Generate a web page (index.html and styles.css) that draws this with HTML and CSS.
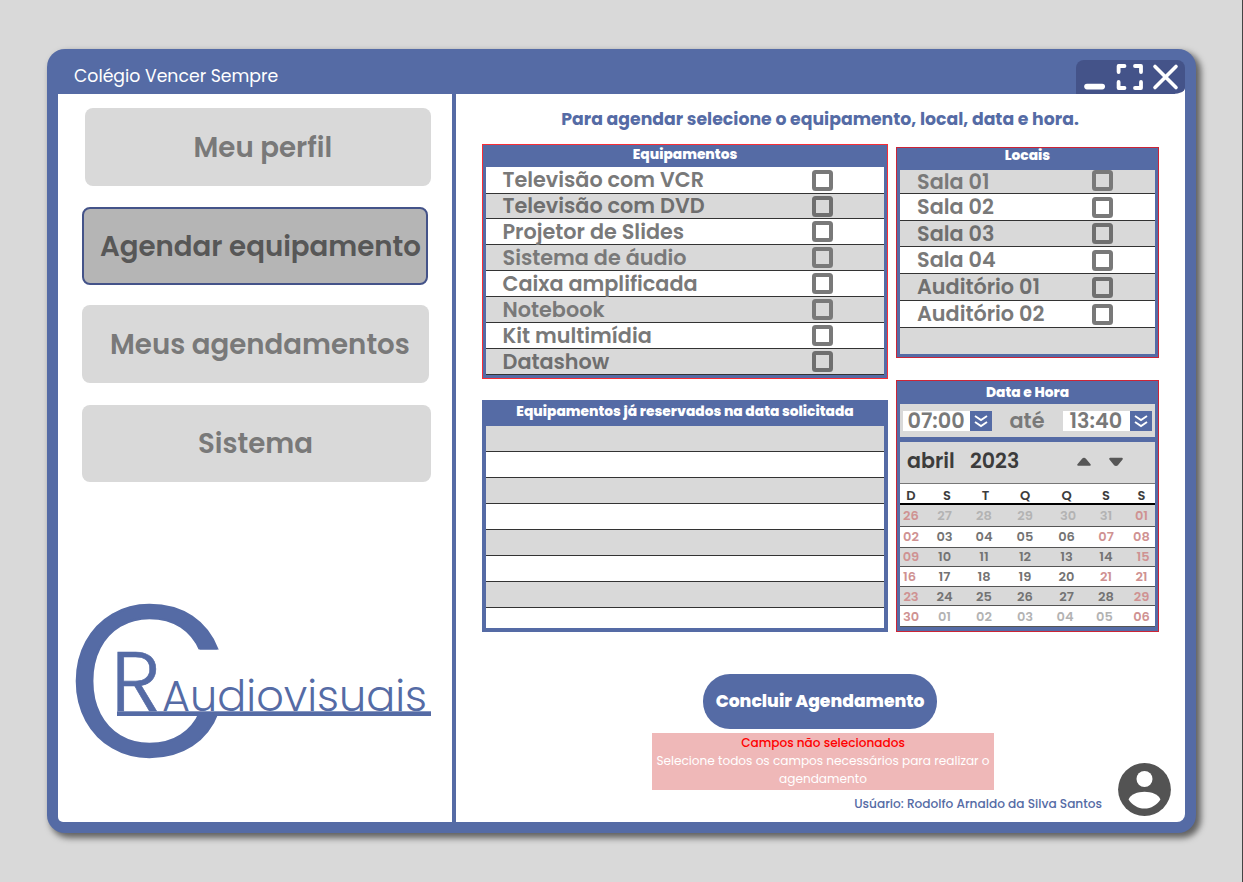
FILE: index.html
```html
<!DOCTYPE html>
<html lang="pt-BR">
<head>
<meta charset="utf-8">
<title>Colégio Vencer Sempre</title>
<link rel="stylesheet" href="styles.css">
</head>
<body>
<div class="window">
  <header class="titlebar">
    <span class="title">Colégio Vencer Sempre</span>
    <div class="controls">
      <svg width="109" height="34" viewBox="0 0 109 34" fill="none" stroke="#fff" stroke-linecap="round">
        <path stroke-width="5.6" d="M11 26.6h15.2"/>
        <path stroke-width="3.8" stroke-linejoin="round" d="M42.6 12V6H48.5M59 6H65V12M65 22V28H59M48.5 28H42.6V22"/>
        <path stroke-width="3.6" d="M79 6.5L100 27.5M100 6.5L79 27.5"/>
      </svg>
    </div>
  </header>
  <div class="body">
    <aside class="sidebar">
      <nav class="nav">
        <a class="nav-item profile">Meu perfil</a>
        <a class="nav-item schedule active">Agendar equipamento</a>
        <a class="nav-item bookings">Meus agendamentos</a>
        <a class="nav-item system">Sistema</a>
      </nav>
      <svg class="logo" width="360" height="162" viewBox="0 0 360 162">
        <clipPath id="opening"><path d="M0 0H360V48.5H120V115H360V162H0Z"/></clipPath>
        <g clip-path="url(#opening)"><text class="logo-c" x="-7.3" y="155">C</text></g>
        <text class="logo-r" x="37" y="110">R</text>
        <text class="logo-name" x="88" y="110.4">Audiovisuais</text>
        <rect x="43" y="110.3" width="314" height="4.7"/>
      </svg>
    </aside>
    <main class="main">
      <h1 class="heading">Para agendar selecione o equipamento, local, data e hora.</h1>
      <div class="panels">
        <div class="column">
          <section class="panel required equipment">
            <h2>Equipamentos</h2>
            <ul class="rows">
              <li style="--h:27px"><span>Televisão com VCR</span><i class="check"></i></li>
              <li class="strong" style="--h:25px"><span>Televisão com DVD</span><i class="check"></i></li>
              <li><span>Projetor de Slides</span><i class="check"></i></li>
              <li><span>Sistema de áudio</span><i class="check"></i></li>
              <li><span>Caixa amplificada</span><i class="check"></i></li>
              <li><span>Notebook</span><i class="check"></i></li>
              <li><span>Kit multimídia</span><i class="check"></i></li>
              <li class="strong"><span>Datashow</span><i class="check"></i></li>
            </ul>
          </section>
          <section class="panel reserved">
            <h2>Equipamentos já reservados na data solicitada</h2>
            <ul class="rows inverse">
              <li></li><li></li><li></li><li></li><li></li><li></li><li></li><li style="--h:20px"></li>
            </ul>
          </section>
        </div>
        <div class="column side">
          <section class="panel required dark places">
            <h2>Locais</h2>
            <ul class="rows inverse">
              <li style="--h:24px"><span>Sala 01</span><i class="check"></i></li>
              <li style="--h:27px"><span>Sala 02</span><i class="check"></i></li>
              <li class="strong"><span>Sala 03</span><i class="check"></i></li>
              <li style="--h:27px"><span>Sala 04</span><i class="check"></i></li>
              <li class="strong" style="--h:27px"><span>Auditório 01</span><i class="check"></i></li>
              <li style="--h:27px"><span>Auditório 02</span><i class="check"></i></li>
              <li></li>
            </ul>
          </section>
          <section class="panel required dark when">
            <h2>Data e Hora</h2>
            <div class="times">
              <div class="time"><span>07:00</span><b><svg width="14" height="14" viewBox="0 0 14 14"><path d="M1 2L7 6L13 2M1 8L7 12L13 8"/></svg></b></div>
              <span class="until">até</span>
              <div class="time end"><span>13:40</span><b><svg width="14" height="14" viewBox="0 0 14 14"><path d="M1 2L7 6L13 2M1 8L7 12L13 8"/></svg></b></div>
            </div>
            <div class="month">
              <span class="name">abril</span><span class="year">2023</span>
              <svg width="46" height="12" viewBox="0 0 46 12" fill="#575757" stroke="#575757" stroke-width="2" stroke-linejoin="round"><path d="M1.2 8.8L5.8 3.4Q7 2 8.2 3.4L12.8 8.8Z"/><path d="M33.2 2.8H44.8L40.5 8.2Q39 9.8 37.5 8.2Z"/></svg>
            </div>
            <div class="week head"><span>D</span><span>S</span><span>T</span><span>Q</span><span>Q</span><span>S</span><span>S</span></div>
            <div class="week alt" style="--h:22px"><span class="off">26</span><span class="dim">27</span><span class="dim">28</span><span class="dim">29</span><span class="dim far">30</span><span class="dim">31</span><span class="off">01</span></div>
            <div class="week" style="--h:21px"><span class="off">02</span><span>03</span><span>04</span><span>05</span><span>06</span><span class="off">07</span><span class="off">08</span></div>
            <div class="week alt" style="--h:19px"><span class="off">09</span><span>10</span><span>11</span><span>12</span><span>13</span><span>14</span><span class="off far">15</span></div>
            <div class="week" style="--h:20px"><span class="off near">16</span><span>17</span><span>18</span><span>19</span><span>20</span><span class="off">21</span><span class="off">21</span></div>
            <div class="week alt low" style="--h:19px"><span class="off">23</span><span>24</span><span>25</span><span>26</span><span>27</span><span>28</span><span class="off">29</span></div>
            <div class="week low" style="--h:21px"><span class="off">30</span><span class="dim">01</span><span class="dim">02</span><span class="dim">03</span><span class="dim near">04</span><span class="dim near">05</span><span class="off">06</span></div>
          </section>
        </div>
      </div>
      <div class="bottom">
        <div class="actions">
          <button class="submit">Concluir Agendamento</button>
          <div class="alert"><strong>Campos não selecionados</strong><p>Selecione todos os campos necessários para realizar o agendamento</p></div>
          <div class="user">Usúario: Rodolfo Arnaldo da Silva Santos</div>
        </div>
        <svg class="avatar" width="53" height="53" viewBox="0 0 53 53"><circle cx="26.5" cy="26.5" r="26.4" fill="#535353"/><circle cx="26.5" cy="16" r="8" fill="#fff"/><path fill="#fff" d="M10.6 36.5C12 31.5 20 28.8 26.5 28.8S41 31.5 42.4 36.5C39 42 33 45.6 26.5 45.6S14 42 10.6 36.5Z"/></svg>
      </div>
    </main>
  </div>
</div>
</body>
</html>
```
FILE: styles.css
```css
* { box-sizing: border-box; }

body {
  margin: 0;
  width: 1243px;
  height: 882px;
  padding: 49px 0 0 47px;
  background: #d9d9d9;
  border-right: 1px solid #444;
  font-family: Poppins, Inter, "Open Sans", sans-serif;
  overflow: hidden;
}

h1, h2, ul, p { margin: 0; padding: 0; }

.window {
  width: 1149px;
  height: 784px;
  background: #556ba5;
  border-radius: 18px;
  box-shadow: 4px 4px 6px 1px rgba(0, 0, 0, .55);
}

.titlebar {
  height: 45px;
  padding: 11px 11px 0 27px;
  display: flex;
  justify-content: space-between;
}

.title {
  font-size: 17.3px;
  line-height: 32px;
  color: #fff;
}

.controls {
  height: 34px;
  background: linear-gradient(#fff, #fff) right bottom / 10px 6px no-repeat;
}

.controls svg {
  display: block;
  background: #445389;
  border-radius: 8px 8px 12px 0 / 8px 8px 6px 0;
}

.body {
  margin: 0 11px 0 11px;
  height: 728px;
  display: grid;
  grid-template-columns: 394px 729px;
  column-gap: 4px;
}

.sidebar, .main { background: #fff; }
.sidebar { border-radius: 0 0 0 5px; }
.main { border-radius: 0 0 8px 0; padding-left: 26px; }

.nav {
  padding: 14px 0 0 24px;
  display: flex;
  flex-direction: column;
}

.nav-item {
  width: 346px;
  height: 78px;
  border-radius: 8px;
  background: #d9d9d9;
  color: #797979;
  font-size: 27.65px;
  font-weight: 600;
  line-height: 79px;
  white-space: nowrap;
}

.profile { margin-left: 3px; padding-left: 108.5px; }
.schedule { margin-top: 21px; padding-left: 16px; height: 77.5px; line-height: 75px; }
.bookings { margin-top: 20.5px; padding-left: 28px; width: 346.5px; }
.system { margin-top: 22px; padding-left: 116px; width: 349px; height: 77px; line-height: 77px; }

.nav-item.active {
  border: 2px solid #445389;
  background: #b5b5b5;
  color: #575757;
}

.logo { display: block; margin: 119px 0 0 16px; fill: #556ba5; overflow: visible; }
.logo-c { font-size: 212px; font-weight: 300; stroke: #556ba5; stroke-width: 2.4px; }
.logo-r { font-size: 85px; font-weight: 300; stroke: #556ba5; stroke-width: .6px; }
.logo-name { font-size: 43px; font-weight: 300; }

.heading {
  height: 50px;
  margin-left: -27px;
  font-size: 17.3px;
  font-weight: 700;
  line-height: 50px;
  text-align: center;
  color: #556ba5;
}

.panels { display: flex; gap: 8px; height: 488px; }
.column { width: 406px; }
.column.side { width: 263px; padding-top: 3px; }

.panel { background: #556ba5; padding: 0 4px; }
.panel.required { border: 1px solid #f92d35; padding: 0 3px; }
.panel.dark { border-color: #cc2436; }

.panel h2 {
  color: #fff;
  font-size: 13.8px;
  font-weight: 800;
  line-height: 19px;
  text-align: center;
}

.equipment { height: 235px; }
.equipment h2 { height: 22px; }
.reserved { margin-top: 21px; height: 232px; }
.reserved h2 { height: 26px; line-height: 23px; }
.places { height: 211px; }
.places h2 { height: 22px; line-height: 15px; }
.when { margin-top: 22px; height: 252px; }
.when h2 { height: 23px; line-height: 23px; }

.rows { list-style: none; }

.rows li {
  --h: 26px;
  height: var(--h);
  display: flex;
  align-items: center;
  justify-content: space-between;
  padding: 0 51px 0 16.5px;
  background: #fff;
  border-bottom: 1px solid #333;
  color: #797979;
  font-size: 20.75px;
  font-weight: 600;
  line-height: 22px;
}

.rows li:nth-child(even) { background: #d9d9d9; }
.rows.inverse li { background: #d9d9d9; }
.rows.inverse li:nth-child(even) { background: #fff; }
.rows.inverse li:last-child { border-bottom: 0; }
.rows li.strong { color: #6f6f6f; }
.places .rows li { padding: 0 42px 0 17px; }
.places li:first-child .check { margin-bottom: 2px; }

.check {
  width: 21px;
  height: 21px;
  border: 4px solid currentColor;
  border-radius: 3.5px;
}

.times {
  height: 33px;
  margin-bottom: 5px;
  padding: 0 3px;
  display: flex;
  align-items: center;
  background: #d9d9d9;
  color: #797979;
  font-size: 20.8px;
  font-weight: 600;
}

.time {
  width: 89px;
  height: 20px;
  padding-left: 4.5px;
  display: flex;
  align-items: center;
  justify-content: space-between;
  background: #fff;
}

.time.end { margin-left: auto; padding-left: 6.5px; }
.time b { width: 22.5px; height: 20px; display: grid; place-items: center; background: #556ba5; }
.time path { fill: none; stroke: #fff; stroke-width: 1.9; }
.until { margin-left: 17.5px; }

.month {
  height: 42px;
  padding: 0 0 4px 7px;
  display: flex;
  align-items: center;
  background: #d9d9d9;
  border-bottom: 1px solid #777;
  color: #3c3c3c;
  font-size: 20.6px;
  font-weight: 600;
}

.month .name { width: 63px; }
.month svg { margin: 2px 32px 0 auto; }

.week {
  height: var(--h);
  display: grid;
  grid-template-columns: 22px 45px 34px 48px 35px 44px 27px;
  align-items: center;
  justify-items: center;
  background: #fff;
  border-bottom: 1px solid #555;
  color: #737373;
  font-size: 13px;
  font-weight: 600;
  line-height: 16px;
}

.week.alt { background: #d9d9d9; }
.week.low { padding-top: 1px; }
.week .off { color: #cf9292; }
.week .dim { color: #b3b3b3; }
.week .far { padding-left: 3px; }
.week .near { padding-right: 3px; }

.week.head {
  height: 21px;
  padding-top: 4px;
  border-bottom: 2px solid #000;
  color: #3c3c3c;
}

.week.head span:nth-child(2) { padding-left: 5px; }
.week.head span:nth-child(3) { padding-left: 3px; }

.bottom { margin-left: -26px; padding-top: 41.5px; display: flex; align-items: flex-start; }
.actions { width: 646px; }

.submit {
  display: block;
  width: 233.5px;
  height: 55.5px;
  margin: 0 0 0 247.3px;
  padding: 0;
  border: 0;
  border-radius: 27px;
  background: #556ba5;
  color: #fff;
  font: 800 17.2px Poppins, Inter, sans-serif;
}

.alert {
  width: 342px;
  height: 57px;
  margin: 4px 0 0 196px;
  padding-top: 1px;
  background: #efb8b8;
  color: #fff;
  font-size: 12.1px;
  line-height: 18px;
  text-align: center;
}

.alert strong { display: block; font-weight: 500; color: #f00; }

.user {
  margin-top: 5px;
  color: #556ba5;
  font-size: 12.15px;
  font-weight: 500;
  line-height: 18px;
  text-align: right;
}

.avatar { margin: 89px 0 0 15.5px; }
```
